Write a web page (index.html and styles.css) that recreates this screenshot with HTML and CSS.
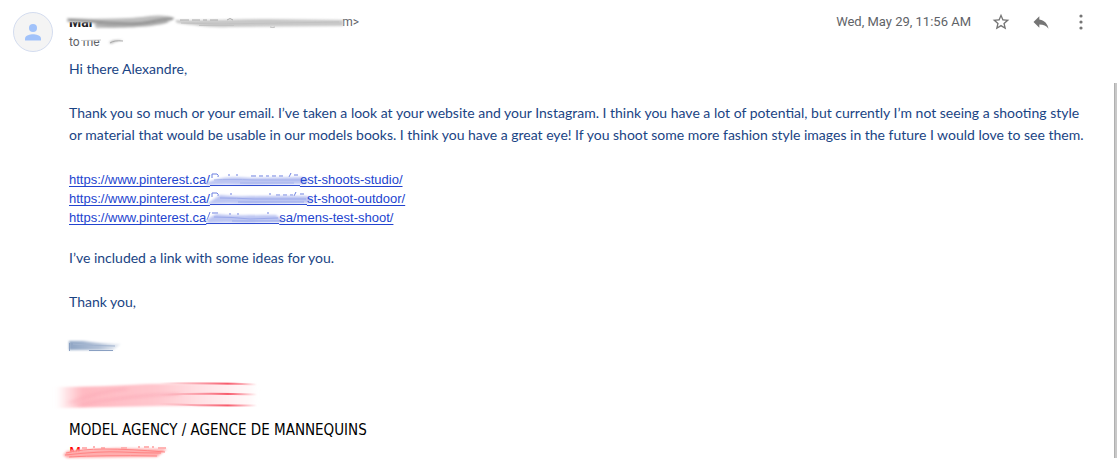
FILE: index.html
```html
<!DOCTYPE html>
<html lang="en">

<head>
    <meta charset="UTF-8">
    <meta name="viewport" content="width=device-width, initial-scale=1.0">
    <title>Message</title>
    <link rel="stylesheet" href="styles.css">
</head>

<body>
    <!-- shared gradients and blurs for the smudges -->
    <svg class="defs" width="0" height="0" aria-hidden="true">
        <defs>
            <filter id="soft" x="-10%" y="-50%" width="120%" height="200%"><feGaussianBlur stdDeviation="1" /></filter>
            <filter id="softer" x="-10%" y="-50%" width="120%" height="200%"><feGaussianBlur stdDeviation="3 1" /></filter>
            <linearGradient id="pink">
                <stop offset="0" stop-color="#ffb8c0" stop-opacity=".1" />
                <stop offset=".12" stop-color="#ffb9c1" />
                <stop offset=".5" stop-color="#ffc6cd" />
                <stop offset="1" stop-color="#ffd4d8" stop-opacity=".1" />
            </linearGradient>
            <linearGradient id="redline" gradientUnits="userSpaceOnUse" x1="90" y1="0" x2="188" y2="0">
                <stop offset="0" stop-color="#f67c8a" stop-opacity="0" />
                <stop offset=".7" stop-color="#f85b6c" />
                <stop offset="1" stop-color="#f85b6c" stop-opacity="0" />
            </linearGradient>
            <linearGradient id="steel">
                <stop offset="0" stop-color="#8fa5c4" />
                <stop offset=".6" stop-color="#b3c2d8" />
                <stop offset="1" stop-color="#c5d0e0" stop-opacity=".3" />
            </linearGradient>
        </defs>
    </svg>

    <main class="message">
        <header class="message-header">
            <svg class="avatar" viewBox="0 0 40 40" aria-hidden="true">
                <circle cx="20" cy="20" r="19.5" fill="#f4f4f4" stroke="#d3dcef" />
                <circle cx="20" cy="16" r="4" fill="#a1c2fa" />
                <path d="M12 28.500v-2c0-2.900 5.300-4.200 8-4.200s8 1.300 8 4.200v2z" fill="#a1c2fa" />
            </svg>

            <div class="sender">
                <div class="sender-line">
                    <strong>Mar</strong>
                    <span class="address">m&gt;</span>
                </div>
                <div class="to-line">to me</div>
                <svg class="sender-smudge" width="300" height="40" viewBox="0 0 300 40" aria-hidden="true">
                    <path d="M-2 2H28V10H-2z" fill="#fff" />
                    <g filter="url(#soft)">
                        <path d="M-2 6C20 7 40 7 60 6S92 1 106 6L98 11C80 16 50 16 27 16L25 11L-2 10z" fill="#bdbdbd" />
                        <path d="M0 8C30 9 55 13 72 11S90 6 104 7" stroke="#8f8f8f" stroke-width="2" fill="none" />
                        <path d="M28 12C50 15 76 13 98 9" stroke="#a2a2a2" stroke-width="2" fill="none" />
                    </g>
                    <path d="M106 8C140 9 168 7 200 7L274 8V14L160 15C140 16 125 13 108 11z" fill="#c8c8c8" filter="url(#soft)" />
                    <path d="M112 11L150 12L270 10M130 13.500H165" stroke="#c2c2c2" fill="none" />
                    <path d="M111 8h9m3 0h8m3 0h4m3 0h8m9 0q3-3 6 0" stroke="#aaa" fill="none" />
                    <path d="M201 15q3 1 5 0" stroke="#bbb" fill="none" />
                    <path d="M10 23H34V28L10 28z" fill="#fff" />
                    <path d="M12 28.500L32 28" stroke="#ccc" fill="none" />
                    <path d="M40 30Q45 27 54 28L46 30L42 32z" fill="#bbb" filter="url(#soft)" />
                    <path d="M41 31Q45 28 54 29" stroke="#aaa" fill="none" />
                </svg>
            </div>

            <time class="date" datetime="05-29T11:56">Wed, May 29, 11:56 AM</time>
            <div class="actions">
                <button type="button" aria-label="Star">
                    <svg width="20" height="20" viewBox="0 0 24 24"><path d="M22 9.240l-7.190-.62L12 2 9.190 8.630 2 9.240l5.460 4.730L5.820 21 12 17.270 18.180 21l-1.630-7.030L22 9.240zM12 15.400l-3.760 2.270 1-4.280-3.320-2.880 4.380-.38L12 6.100l1.710 4.040 4.380.38-3.320 2.880 1 4.280L12 15.400z" /></svg>
                </button>
                <button type="button" aria-label="Reply">
                    <svg width="20" height="20" viewBox="0 0 24 24"><path d="M10 9V5l-7 7 7 7v-4.100c5 0 8.500 1.600 11 5.100-1-5-4-10-11-11z" /></svg>
                </button>
                <button type="button" aria-label="More">
                    <svg width="20" height="20" viewBox="0 0 20 20"><circle cx="10" cy="4" r="1.600" /><circle cx="10" cy="10" r="1.600" /><circle cx="10" cy="16" r="1.600" /></svg>
                </button>
            </div>
        </header>

        <div class="message-body">
            <p>Hi there Alexandre,</p>
            <p>Thank you so much or your email. I’ve taken a look at your website and your Instagram. I think you have a lot of potential, but currently I’m not seeing a shooting style<br>or material that would be usable in our models books. I think you have a great eye! If you shoot some more fashion style images in the future I would love to see them.</p>

            <ul class="links">
                <li><a href="#">https://www.pinterest.ca/<svg width="90" height="15" viewBox="0 0 90 15" aria-hidden="true">
                    <path d="M2 6V2h5q2 1 1 3M18 3h2M26 3h2M41 4h5m3 0h4m3 0h3m3 0h4m3 0h4M79 5l2-4M84 3h4" stroke="#6b7fe0" fill="none" />
                    <path d="M-4 11C12 4 25 5 42 6L92 5Q103 8 95 12L40 13Q15 12 -4 13z" fill="#bcc5f2" filter="url(#soft)" />
                    <path d="M4 8Q20 7 44 8L90 8M30 11H84" stroke="#a6b3ec" fill="none" />
                    <path d="M0 13.500H90" stroke="#3450d2" />
                </svg>est-shoots-studio/</a></li>
                <li><a href="#">https://www.pinterest.ca/<svg width="97" height="15" viewBox="0 0 97 15" aria-hidden="true">
                    <path d="M2 6V2h5q2 1 1 3M20 3h2M59 3h2M66 4h4m3 0h4m3 0h3M84 5l2-4M90 3h4" stroke="#6b7fe0" fill="none" />
                    <path d="M-2 12L10 4C25 6 42 5 60 5L96 5Q106 8 99 12L40 13Q20 12 -2 13z" fill="#bcc5f2" filter="url(#soft)" />
                    <path d="M10 7Q26 7 44 8L96 8M28 11H94" stroke="#9ba9ea" fill="none" />
                    <path d="M0 13.500H97" stroke="#3450d2" />
                </svg>st-shoot-outdoor/</a></li>
                <li><a href="#">https://www.pinterest.ca<svg width="73" height="15" viewBox="0 0 73 15" aria-hidden="true">
                    <path d="M1 10l3-8M6 3h6M23 4h2M31 4h2M61 3h2" stroke="#6b7fe0" fill="none" />
                    <path d="M0 10L10 4C25 6 42 5 70 5L79 12L40 13Q20 12 2 13z" fill="#bcc5f2" filter="url(#soft)" />
                    <path d="M8 7Q26 7 44 9L72 8M26 11H75" stroke="#9ba9ea" fill="none" />
                    <path d="M0 13.500H73" stroke="#3450d2" />
                </svg>sa/mens-test-shoot/</a></li>
            </ul>

            <p>I’ve included a link with some ideas for you.</p>
            <p>Thank you,</p>

            <div class="signature">
                <svg width="60" height="22" viewBox="0 0 60 22" aria-hidden="true">
                    <path d="M0 6L14 6Q32 9 52 9L44 15L0 15z" fill="url(#steel)" filter="url(#soft)" />
                    <path d="M.5 8V16M20 15.500H44" stroke="#8aa0c2" fill="none" />
                    <path d="M4 9Q24 11 46 11" stroke="#a3b5d0" fill="none" />
                </svg>
                <svg class="name-smudge" width="220" height="62" viewBox="-14 0 220 62" aria-hidden="true">
                    <path d="M-10 30Q30 30 80 27L182 26Q190 38 182 49L90 49Q40 50 -10 51z" fill="url(#pink)" filter="url(#softer)" />
                    <path d="M2 46Q28 34 58 32M10 48Q60 38 110 37" stroke="#fba9b6" stroke-width="4" opacity=".4" fill="none" filter="url(#softer)" />
                    <g fill="none" stroke="url(#redline)" stroke-width="2">
                        <path d="M40 28Q90 25 188 27.500" />
                        <path d="M90 38Q130 36 190 37.500" />
                        <path d="M90 47Q140 49 188 48.500" />
                    </g>
                </svg>
                <p class="agency">MODEL AGENCY / AGENCE DE MANNEQUINS</p>
                <p class="division">M<svg width="120" height="22" viewBox="0 0 120 22" aria-hidden="true">
                    <path d="M1 7h5M12 6h2M20 7h4M40 7h6M57 6h2m4 0h5m3 0h2m4 1h8" fill="none" stroke="#ff6a6a" />
                    <path d="M-14 10Q10 8 36 7L86 8L76 16L-14 17L-18 14z" fill="#ffadad" filter="url(#soft)" />
                    <path d="M-15 12Q0 8 24 8T84 11M-16 14Q20 10 40 11T80 12M-12 16Q20 14 76 15" stroke="#ff8484" fill="none" />
                </svg></p>
            </div>
        </div>
    </main>
    <div class="scroll-thumb"></div>
</body>

</html>
```
FILE: styles.css
```css
body {
    display: flex;
    min-height: 100vh;
    margin: 0;
    background-color: white;
    font-family: Roboto, "Liberation Sans", sans-serif;
}

.defs {
    position: absolute;
}

.message {
    flex: 1;
    padding: 12px 13px 0;
}

.message-header {
    display: flex;
    align-items: flex-start;
    color: #5f6368;
}

.avatar {
    width: 40px;
    height: 40px;
    margin-right: 16px;
}

.sender {
    position: relative;
    flex: 1;
    font-size: 12px;
    line-height: 20px;
}

.sender-line {
    display: flex;
    width: 290px;
    justify-content: space-between;
}

.sender-line strong {
    color: #202124;
    font-size: 14px;
}

.sender-smudge {
    position: absolute;
    top: 0;
    left: 0;
    overflow: visible;
}

.date {
    margin-right: 10px;
    font-size: 13px;
    line-height: 20px;
}

.actions {
    display: flex;
}

.actions button {
    width: 40px;
    height: 20px;
    padding: 0;
    border: 0;
    background: none;
    cursor: pointer;
}

.actions svg {
    display: block;
    margin: 0 auto;
    fill: #757575;
}

.message-body {
    padding: 6px 0 0 56px;
    color: #1a4484;
    font-family: Lato, "Liberation Sans", sans-serif;
    font-size: 14px;
    line-height: 22px;
}

.message-body p {
    margin: 0 0 22px;
}

.links {
    margin: 24px 0 20px;
    padding: 0;
    list-style: none;
    font-family: "Liberation Sans", Arial, sans-serif;
    font-size: 13px;
    line-height: 19px;
}

.links li {
    height: 19px;
}

.links a {
    color: #2344cf;
    text-decoration-skip-ink: none;
    text-underline-offset: 2px;
}

.links svg {
    overflow: visible;
    vertical-align: -3px;
}

.signature svg {
    display: block;
    overflow: visible;
}

.signature .name-smudge {
    margin-left: -14px;
}

.signature p {
    margin: 0;
}

.signature .agency {
    color: black;
    font-family: "DejaVu Sans Condensed", "DejaVu Sans", sans-serif;
    font-size: 15px;
}

.signature .division {
    display: flex;
    color: red;
    font-family: "DejaVu Sans", sans-serif;
}

.scroll-thumb {
    width: 2px;
    margin: 83px 0 8px;
    border-left: 1px solid #b0b0b0;
    background-color: #c8c8c8;
}
```
